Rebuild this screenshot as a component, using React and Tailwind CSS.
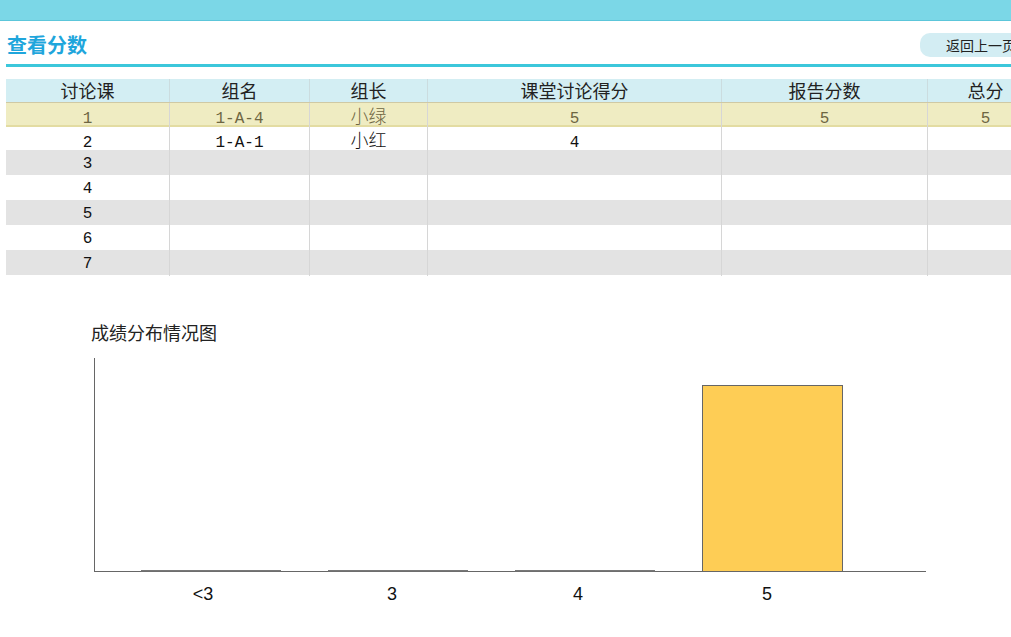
import React from "react";

const heads = ["讨论课", "组名", "组长", "课堂讨论得分", "报告分数", "总分"];
const rows = [
  ["1", "1-A-4", "小绿", "5", "5", "5"],
  ["2", "1-A-1", "小红", "4", "", ""],
  ["3", "", "", "", "", ""],
  ["4", "", "", "", "", ""],
  ["5", "", "", "", "", ""],
  ["6", "", "", "", "", ""],
  ["7", "", "", "", "", ""],
];

const gridCols = "grid grid-cols-[163px_140px_118px_294px_206px_116px]";

function Cell({ text, i }) {
  const cjk = /[\u4e00-\u9fff]/.test(text);
  return (
    <div
      className={`flex items-center justify-center h-full pt-[2px] ${i > 0 ? "border-l border-[#d6d6d6]" : ""} ${
        cjk ? "text-[18px] font-light" : "text-[16px]"
      }`}
    >
      {text}
    </div>
  );
}

function ScoreTable() {
  return (
    <div className="ml-[6px] mt-[12px] w-[1037px]" style={{ fontFamily: '"Liberation Mono", "Noto Sans CJK SC", monospace' }}>
      <div
        className={`${gridCols} h-[23px] bg-[#d3eef3] text-[18px] leading-[23px] text-[#222]`}
        style={{ fontFamily: '"Noto Sans CJK SC", sans-serif' }}
      >
        {heads.map((h, i) => (
          <div key={h} className={`text-center ${i > 0 ? "border-l border-[#cbdcdf]" : ""}`}>
            {h}
          </div>
        ))}
      </div>
      {rows.map((r, idx) => {
        let cls = "h-[25px] bg-white text-[#111]";
        if (idx === 0) cls = "h-[25px] bg-[#efecc2] border-t border-[#cfc9a4] border-b-2 border-b-[#e3dca2] text-[#6e6642]";
        else if (idx === 1) cls = "h-[23px] bg-white text-[#111]";
        else if (idx % 2 === 0) cls = "h-[25px] bg-[#e3e3e3] text-[#111]";
        return (
          <div key={idx} className={`${gridCols} ${cls}`}>
            {r.map((c, i) => (
              <Cell key={i} text={c} i={i} />
            ))}
          </div>
        );
      })}
    </div>
  );
}

function Chart() {
  const bars = [
    { x: 141, label: "<3", lx: 203, h: 0 },
    { x: 328, label: "3", lx: 392, h: 0 },
    { x: 515, label: "4", lx: 578, h: 0 },
    { x: 702, label: "5", lx: 767, h: 186 },
  ];
  const base = 227;
  return (
    <svg width="1011" height="293" className="block">
      <line x1="94.5" y1="14" x2="94.5" y2={base + 0.5} stroke="#666" strokeWidth="1" />
      <line x1="94" y1={base + 0.5} x2="926" y2={base + 0.5} stroke="#666" strokeWidth="1" />
      {bars.map((b) =>
        b.h > 0 ? (
          <rect key={b.label} x={b.x + 0.5} y={base - b.h + 0.5} width="140" height={b.h} fill="#fecd55" stroke="#666" strokeWidth="1" />
        ) : (
          <rect key={b.label} x={b.x} y={base - 1} width="140" height="1.5" fill="#777" />
        )
      )}
      {bars.map((b) => (
        <text
          key={"t" + b.label}
          x={b.lx}
          y="256"
          textAnchor="middle"
          fontSize="18"
          fill="#111"
          fontFamily='"Liberation Sans", Arial, sans-serif'
        >
          {b.label}
        </text>
      ))}
    </svg>
  );
}

export default function App() {
  return (
    <div className="w-screen h-[637px] overflow-hidden bg-white">
      <div className="w-[1043px]" style={{ fontFamily: '"Noto Sans CJK SC", sans-serif' }}>
        <div className="h-[21px] bg-[#7bd7e7] border-b border-[#5cc6da]" />
        <div className="flex items-center justify-between pl-[7px] pt-[12px] pb-[7px]">
          <h1 className="text-[20px] leading-[24px] font-bold text-[#1fa6dc]">查看分数</h1>
          <button className="h-[24px] w-[123px] rounded-l-[10px] rounded-r-[10px] bg-[#d3edf3] pl-[26px] text-left text-[14px] leading-[24px] text-[#222]">
            返回上一页
          </button>
        </div>
        <div className="ml-[6px] h-[3px] bg-[#3cc7db]" />
        <ScoreTable />
        <div className="ml-[91px] mt-[45px] text-[18px] leading-[24px] text-[#222]">成绩分布情况图</div>
        <Chart />
      </div>
    </div>
  );
}
